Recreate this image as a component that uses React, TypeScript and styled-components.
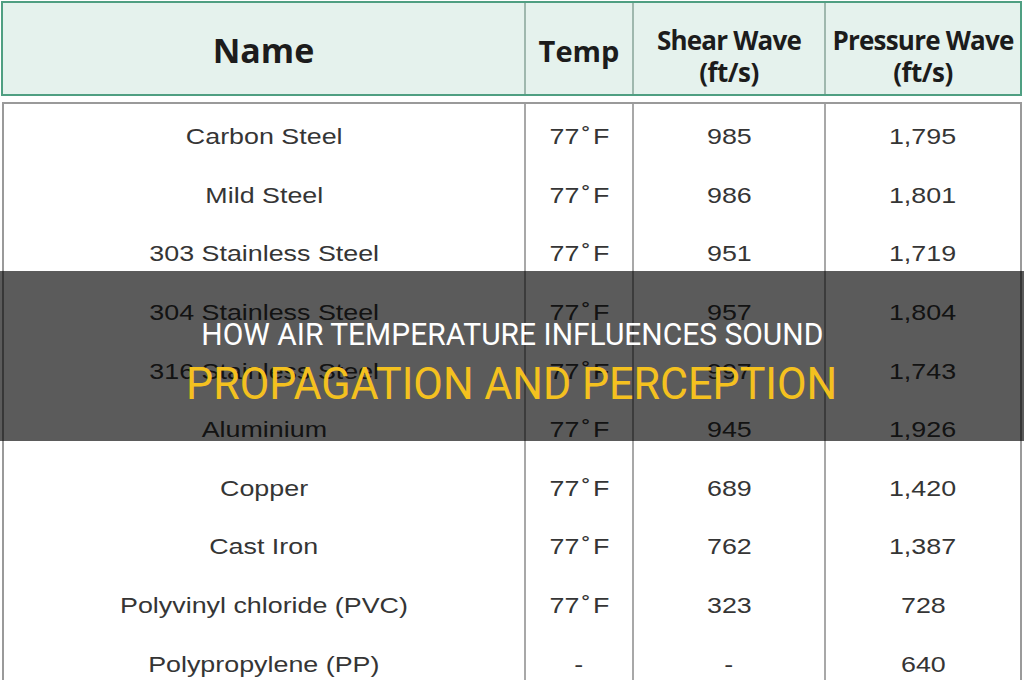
import React from "react";
import styled, { createGlobalStyle } from "styled-components";

const Global = createGlobalStyle`
  html, body { margin: 0; padding: 0; background: #ffffff; }
  #root { width: 1024px; height: 680px; }
`;

const Page = styled.div`
  position: relative;
  width: 1024px;
  height: 680px;
  overflow: hidden;
  background: #ffffff;
  padding: 1px 2px 0 1px;
  box-sizing: border-box;
`;

const cols = "521px 108px 192px 1fr";

const HeaderRow = styled.div`
  display: grid;
  grid-template-columns: ${cols};
  height: 95px;
  box-sizing: border-box;
  border: 2px solid #4f9f82;
  background: #e5f2ed;
`;

const HeadCell = styled.div<{ $first?: boolean; $twoLine?: boolean }>`
  display: flex;
  flex-direction: column;
  align-items: center;
  justify-content: center;
  border-left: ${(p) => (p.$first ? "none" : "2px solid #9fb8ae")};
  padding-top: ${(p) => (p.$twoLine ? "14px" : "3px")};
  font-family: "Open Sans", "Noto Sans", sans-serif;
  font-weight: 700;
  color: #1c1c1c;
  text-align: center;
`;

const HeadText = styled.span<{ $size: number; $ls?: number }>`
  font-size: ${(p) => p.$size}px;
  line-height: ${(p) => Math.round(p.$size * 1.22)}px;
  letter-spacing: ${(p) => p.$ls ?? 0}px;
  white-space: nowrap;
`;

const Body = styled.div`
  margin-top: 6px;
  margin-left: 1px;
  border: 2px solid #9a9a9a;
  border-bottom: none;
  box-sizing: border-box;
  height: 600px;
  display: flex;
  flex-direction: column;
`;

const Cell = styled.div<{ $first?: boolean }>`
  display: flex;
  align-items: center;
  justify-content: center;
  box-sizing: border-box;
  border-left: ${(p) => (p.$first ? "none" : "2px solid #a8a8a8")};
  font-family: "Liberation Sans", Arial, sans-serif;
  font-size: 22px;
  color: #353535;
`;

const BodyRow = styled.div`
  display: grid;
  grid-template-columns: 520px 108px 192px 1fr;
  height: 58.6px;
  flex: none;

  &:first-child {
    height: 62.6px;
  }
  &:first-child > ${Cell} {
    padding-top: 4px;
  }
`;

const Wide = styled.span`
  display: inline-block;
  transform: scaleX(1.22);
  white-space: nowrap;
`;

const Overlay = styled.div`
  position: absolute;
  left: 0;
  right: 0;
  top: 271px;
  height: 170px;
  background: rgba(0, 0, 0, 0.643);
  display: flex;
  flex-direction: column;
  align-items: center;
  justify-content: center;
  gap: 5px;
  padding-top: 13px;
  box-sizing: border-box;
`;

const TitleLine = styled.div<{ $color: string; $size: number; $sx: number }>`
  font-family: Roboto, "Liberation Sans", sans-serif;
  font-weight: 400;
  color: ${(p) => p.$color};
  font-size: ${(p) => p.$size}px;
  line-height: ${(p) => Math.round(p.$size * 1.15)}px;
  white-space: nowrap;
  transform: scaleX(${(p) => p.$sx});
`;

const T = "77\u200A˚\u200AF";

const rows: [string, string, string, string][] = [
  ["Carbon Steel", T, "985", "1,795"],
  ["Mild Steel", T, "986", "1,801"],
  ["303 Stainless Steel", T, "951", "1,719"],
  ["304 Stainless Steel", T, "957", "1,804"],
  ["316 Stainless Steel", T, "997", "1,743"],
  ["Aluminium", T, "945", "1,926"],
  ["Copper", T, "689", "1,420"],
  ["Cast Iron", T, "762", "1,387"],
  ["Polyvinyl chloride (PVC)", T, "323", "728"],
  ["Polypropylene (PP)", "-", "-", "640"],
];

export default function App() {
  return (
    <>
      <Global />
      <Page>
        <HeaderRow>
          <HeadCell $first>
            <HeadText $size={34}>Name</HeadText>
          </HeadCell>
          <HeadCell>
            <HeadText $size={29}>Temp</HeadText>
          </HeadCell>
          <HeadCell $twoLine>
            <HeadText $size={26} $ls={-0.8}>Shear Wave</HeadText>
            <HeadText $size={26} $ls={-0.5}>(ft/s)</HeadText>
          </HeadCell>
          <HeadCell $twoLine>
            <HeadText $size={26} $ls={-0.8}>Pressure Wave</HeadText>
            <HeadText $size={26} $ls={-0.5}>(ft/s)</HeadText>
          </HeadCell>
        </HeaderRow>
        <Body>
          {rows.map((r) => (
            <BodyRow key={r[0]}>
              <Cell $first>
                <Wide>{r[0]}</Wide>
              </Cell>
              <Cell>
                <Wide>{r[1]}</Wide>
              </Cell>
              <Cell>
                <Wide>{r[2]}</Wide>
              </Cell>
              <Cell>
                <Wide>{r[3]}</Wide>
              </Cell>
            </BodyRow>
          ))}
        </Body>
        <Overlay>
          <TitleLine $color="#ffffff" $size={32} $sx={0.936}>
            HOW AIR TEMPERATURE INFLUENCES SOUND
          </TitleLine>
          <TitleLine $color="#f4c11f" $size={45} $sx={0.956}>
            PROPAGATION AND PERCEPTION
          </TitleLine>
        </Overlay>
      </Page>
    </>
  );
}
